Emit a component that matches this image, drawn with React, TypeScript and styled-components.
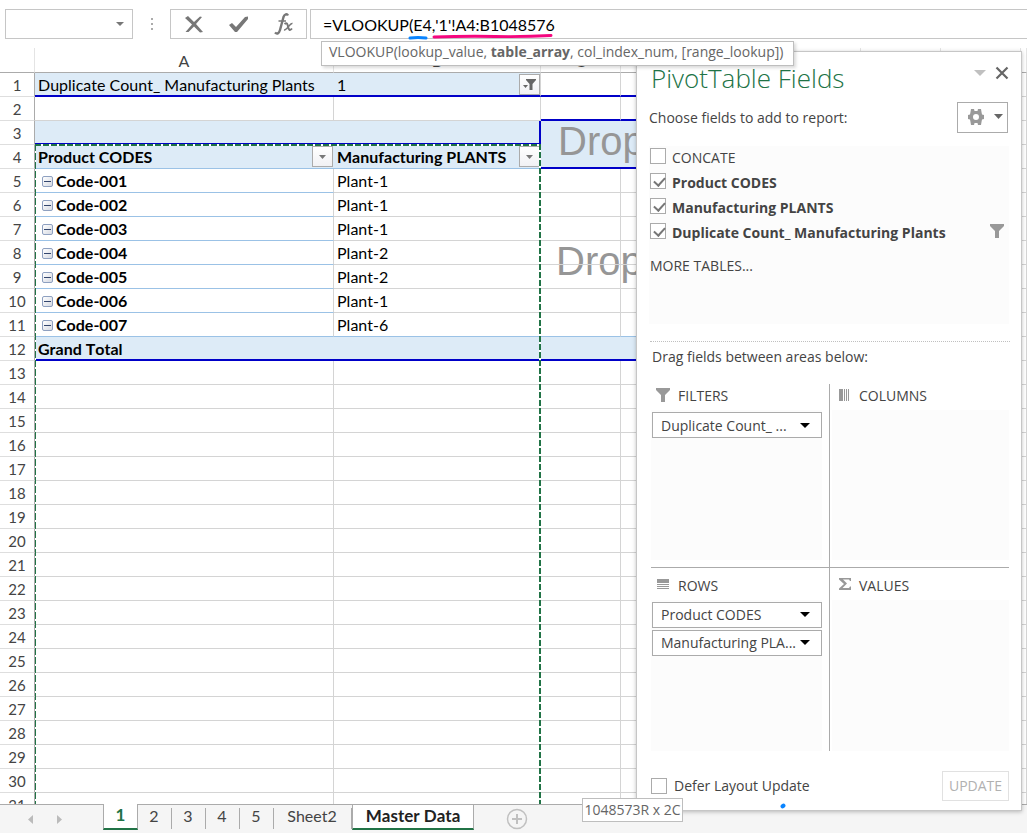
import React from "react";
import styled, { createGlobalStyle, css } from "styled-components";

const sheetFont = `Lato, "Liberation Sans", sans-serif`;
const paneFont = `"Open Sans", "Noto Sans", sans-serif`;

const GlobalStyle = createGlobalStyle`
  * { box-sizing: border-box; }
  body { margin: 0; background: #fff; font-family: ${sheetFont}; font-size: 16px; font-kerning: none; color: #000; }
  button, input { font: inherit; font-kerning: inherit; color: inherit; margin: 0; padding: 0; border-radius: 0; }
  button { background: none; border: 0; cursor: pointer; }
`;

const Window = styled.div`
  position: relative;
  display: flex;
  flex-direction: column;
  height: 100vh;
  min-height: 600px;
  overflow: hidden;
`;

/* ---------- formula bar ---------- */

const FormulaBar = styled.header`
  display: flex;
  flex: none;
  height: 48px;
  padding: 9px 0 9px 5px;
`;

const NameBox = styled.div`
  display: flex;
  width: 128px;
  border: 1px solid #c6c6c6;
  input { flex: 1; min-width: 0; border: 0; outline: 0; padding-left: 6px; }
  button { width: 24px; display: grid; place-items: center; }
`;

const Grip = styled.span`
  display: grid;
  place-items: center;
  width: 37px;
`;

const FormulaActions = styled.div`
  display: flex;
  justify-content: space-around;
  width: 137px;
  border: 1px solid #c6c6c6;
  button { width: 45px; display: grid; place-items: center; }
`;

const FormulaField = styled.div`
  position: relative;
  flex: 1;
  margin-left: 3px;
  border: 1px solid #c6c6c6;
  border-right: 0;
  input { width: 100%; height: 28px; border: 0; outline: 0; padding-left: 12px; }
`;

const PenMarks = styled.svg`
  position: absolute;
  left: 94px;
  top: 22px;
  pointer-events: none;
`;

const SyntaxTip = styled.div`
  position: absolute;
  z-index: 6;
  left: 321px;
  top: 41px;
  height: 25px;
  padding: 0 10px 0 7px;
  border: 1px solid #bebebe;
  background: #fff;
  box-shadow: 2px 2px 3px rgba(0, 0, 0, 0.15);
  color: #666;
  font: 14px/20px ${paneFont};
  white-space: nowrap;
`;

/* ---------- grid ---------- */

const Sheet = styled.main`
  position: relative;
  flex: 1;
  min-height: 0;
  overflow: hidden;
`;

const Grid = styled.table`
  position: relative;
  z-index: 1;
  width: 100%;
  table-layout: fixed;
  border-collapse: separate;
  border-spacing: 0;
`;

const ColHead = styled.th`
  height: 25px;
  padding: 0;
  border-bottom: 1px solid #ababab;
  border-right: 1px solid #e4e4e4;
  color: #444;
  font-weight: 400;
`;

const RowHead = styled.th`
  height: 24px;
  padding: 0;
  border-right: 1px solid #ababab;
  border-bottom: 1px solid #dedede;
  color: #444;
  font-size: 15px;
  font-weight: 400;
  line-height: 20px;
`;

type Line = "grid" | "pale" | "navy";

const bottoms: Record<Line, string> = {
  grid: "1px solid #d4d4d4",
  pale: "1px solid #9bc2e6",
  navy: "2px solid #0000c8",
};

const Cell = styled.td<{ $bottom?: Line; $fill?: boolean; $open?: boolean; $bold?: boolean; $navySide?: boolean }>`
  height: 24px;
  padding: ${(p) => (p.$bottom === "navy" ? "1px 0 0 3px" : "0 0 0 3px")};
  overflow: hidden;
  white-space: nowrap;
  line-height: 20px;
  border-bottom: ${(p) => bottoms[p.$bottom ?? "grid"]};
  border-right: ${(p) => (p.$open ? "0" : p.$navySide ? "2px solid #0000c8" : "1px solid #d4d4d4")};
  ${(p) => p.$fill && css`background: #ddebf7;`}
  ${(p) => p.$bold && css`font-weight: 700;`}
`;

const CellRow = styled.div<{ $inset?: boolean }>`
  display: flex;
  align-items: center;
  justify-content: space-between;
  height: 21px;
  padding-right: ${(p) => (p.$inset ? 1 : 0)}px;
`;

const DropCell = styled(Cell)`
  height: 48px;
  padding: 0 0 0 17px;
  vertical-align: top;
  color: #969696;
  font: 40px/40px "Liberation Sans", Arial, sans-serif;
`;

const DropHint = styled.div`
  position: absolute;
  left: 556px;
  top: 193px;
  color: #969696;
  font: 40px/40px "Liberation Sans", Arial, sans-serif;
`;

const FilterButton = styled.button`
  display: grid;
  place-items: center;
  width: 21px;
  height: 21px;
  border: 1px solid #ababab;
  background: linear-gradient(#fff, #f1f1f4);
`;

const CodeRow = styled.div`
  display: flex;
  align-items: center;
  gap: 3px;
  padding-left: 4px;
`;

const Collapse = styled.button`
  display: grid;
  place-items: center;
  width: 11px;
  height: 11px;
  margin-top: 2px;
  border: 1px solid #8ea0c0;
  border-radius: 2px;
  background: linear-gradient(135deg, #fff, #d5d9e2);
  &::before { content: ""; width: 7px; height: 1px; background: #33466e; }
`;

const CopyOutline = styled.div`
  position: absolute;
  z-index: 2;
  left: 35px;
  top: 96px;
  bottom: 0;
  width: 506px;
  pointer-events: none;
  background:
    repeating-linear-gradient(90deg, #217346 0 6px, #fff 6px 8px) 0 0 / 100% 2px no-repeat,
    repeating-linear-gradient(#217346 0 7px, #fff 7px 9px) 0 0 / 1px 100% no-repeat,
    repeating-linear-gradient(#217346 0 6px, #fff 6px 8px) 100% 0 / 2px 100% no-repeat;
`;

/* ---------- sheet tabs ---------- */

const TabBar = styled.footer`
  display: flex;
  flex: none;
  height: 29px;
  background: #f5f5f5;
`;

const TabNav = styled.div`
  display: flex;
  justify-content: space-between;
  align-items: center;
  width: 103px;
  padding: 0 39px 0 26px;
  border-top: 1px solid #ababab;
  button { display: grid; place-items: center; width: 9px; height: 18px; }
`;

const Tab = styled.button<{ $width?: number }>`
  width: ${(p) => p.$width ?? 34}px;
  height: 29px;
  padding: 0 2px 8px 0;
  border-top: 1px solid #ababab;
  color: #444;
  background: linear-gradient(#ababab, #ababab) 100% 3px / 1px 21px no-repeat;
`;

const ActiveTab = styled(Tab)<{ $green?: boolean }>`
  height: 26px;
  padding: 0 0 4px;
  border: solid #ababab;
  border-width: ${(p) => (p.$green ? "0 1px 2px" : "1px 1px 2px")};
  border-bottom-color: #217346;
  background: #fff;
  color: ${(p) => (p.$green ? "#217346" : "#222")};
  font-size: 17px;
  font-weight: 700;
`;

const TabRest = styled.div`
  flex: 1;
  padding: 3px 0 0 32px;
  border-top: 1px solid #ababab;
  button { display: block; width: 22px; height: 22px; }
`;

const SizeTip = styled.div`
  position: absolute;
  z-index: 7;
  left: 582px;
  bottom: 11px;
  width: 101px;
  height: 24px;
  border: 1px solid #bebebe;
  background: #fff;
  color: #666;
  font: 14px/22px ${paneFont};
  text-align: center;
  white-space: nowrap;
`;

const PenDot = styled.svg`
  position: absolute;
  z-index: 7;
  left: 780px;
  bottom: 24px;
`;

/* ---------- PivotTable pane ---------- */

const Pane = styled.aside`
  position: absolute;
  z-index: 5;
  top: 51px;
  right: 5px;
  bottom: 22px;
  width: 386px;
  display: flex;
  flex-direction: column;
  padding: 0 12px;
  border: 1px solid #c6c6c6;
  background: #fff;
  box-shadow: 0 1px 4px rgba(0, 0, 0, 0.25);
  color: #444;
  font-family: ${paneFont};
  font-size: 14px;
`;

const PaneHeader = styled.div`
  display: flex;
  justify-content: space-between;
  height: 49px;
  padding-top: 8px;
  h2 { margin: 0 0 0 2px; color: #217346; font-size: 26px; font-weight: 300; line-height: 36px; }
`;

const PaneTools = styled.div`
  display: flex;
  align-items: center;
  gap: 9px;
  height: 26px;
  button { display: grid; place-items: center; }
`;

const ChooseRow = styled.div`
  display: flex;
  justify-content: space-between;
  align-items: center;
  height: 33px;
  padding-right: 1px;
`;

const GearButton = styled.button`
  display: flex;
  align-items: center;
  justify-content: space-between;
  width: 51px;
  height: 31px;
  padding: 0 4px 2px 10px;
  border: 1px solid #ababab;
`;

const FieldList = styled.div`
  height: 178px;
  margin-top: 12px;
  padding-left: 1px;
  background: #fcfcfc;
`;

const Field = styled.label<{ $on?: boolean }>`
  display: flex;
  align-items: flex-start;
  gap: 6px;
  height: 25px;
  padding: 2px 5px 0 0;
  line-height: 19px;
  font-weight: ${(p) => (p.$on ? 700 : 400)};
  svg { margin: 1px 0 0 auto; }
`;

const Tick = styled.input`
  appearance: none;
  flex: none;
  width: 16px;
  height: 16px;
  border: 1px solid #ababab;
  background: #fff;
  &:checked::before {
    content: "";
    display: block;
    width: 5px;
    height: 9px;
    margin: 1px 0 0 5px;
    border: solid #777;
    border-width: 0 2px 2px 0;
    transform: rotate(42deg);
  }
`;

const MoreTables = styled.a`
  display: block;
  margin-top: 10px;
  color: #444;
  text-decoration: none;
  line-height: 20px;
`;

const DragHint = styled.p`
  margin: 17px -1px 0 1px;
  padding: 5px 0 0 2px;
  border-top: 1px dotted #c0c0c0;
  line-height: 20px;
`;

const Areas = styled.div`
  flex: 1;
  display: grid;
  grid-template-columns: 178px 1fr;
  grid-template-rows: 1fr 1fr;
  margin: 17px 0 0 2px;
`;

const Area = styled.section<{ $left?: boolean; $top?: boolean }>`
  display: flex;
  flex-direction: column;
  padding: ${(p) => (p.$left ? "0 7px" : "0 0")} ${(p) => (p.$top ? "7px" : "0")} ${(p) => (p.$left ? "0" : "2px")};
  border: 0 solid #ababab;
  border-left-width: ${(p) => (p.$left ? 0 : 1)}px;
  border-bottom-width: ${(p) => (p.$top ? 1 : 0)}px;
  h3 {
    display: flex;
    align-items: center;
    gap: 8px;
    height: ${(p) => (p.$top ? 26 : 32)}px;
    margin: 0;
    padding: ${(p) => (p.$top ? "0 0 3px" : "3px 0 0")} ${(p) => (p.$left ? 5 : 7)}px;
    font-size: 14px;
    font-weight: 400;
  }
  h3 svg { margin-bottom: 2px; }
`;

const DropZone = styled.div`
  flex: 1;
  display: flex;
  flex-direction: column;
  gap: 2px;
  padding: 2px 0 0 1px;
  background: #fcfcfc;
`;

const FieldChip = styled.button`
  display: flex;
  align-items: center;
  justify-content: space-between;
  height: 26px;
  padding: 0 11px 0 8px;
  border: 1px solid #ababab;
  background: #fff;
`;

const PaneFooter = styled.div`
  display: flex;
  justify-content: space-between;
  align-items: center;
  height: 59px;
  padding: 10px 0 0 2px;
  label { display: flex; align-items: center; gap: 7px; }
`;

const UpdateButton = styled.button`
  width: 67px;
  height: 30px;
  border: 1px solid #e1e1e1;
  color: #b1b1b1;
`;

/* ---------- icons ---------- */

const Caret = ({ w = 8, h = 4, color = "#777" }: { w?: number; h?: number; color?: string }) => (
  <svg width={w} height={h} viewBox={`0 0 ${w} ${h}`} aria-hidden="true">
    <path d={`M0 0H${w}L${w / 2} ${h}Z`} fill={color} />
  </svg>
);

const Funnel = () => (
  <svg width="14" height="14" viewBox="0 0 14 14" aria-hidden="true">
    <path d="M0 0H14V2L9 7V14H5V7L0 2Z" fill="#999" />
  </svg>
);

const FunnelApplied = () => (
  <svg width="13" height="12" viewBox="0 0 13 12" aria-hidden="true">
    <path d="M3 0H13V1L9.500 5V11H6.500V5L3 1Z" fill="#666" />
    <path d="M0 6H5L2.500 9Z" fill="#666" />
  </svg>
);

const Gear = () => (
  <svg width="16" height="16" viewBox="0 0 16 16" aria-hidden="true">
    <path
      fillRule="evenodd"
      fill="#999"
      d="M3 0H6L6.500 2H9.500L10 0H13L13.500 3L14 5.500L16 6V10L14 10.500L13.500 13L13 16H10L9.500 14H6.500L6 16H3L2.500 13L2 10.500L0 10V6L2 5.500L2.500 3ZM8 5A3 3 0 1 0 8 11A3 3 0 1 0 8 5Z"
    />
  </svg>
);

const ColumnsIcon = () => (
  <svg width="12" height="12" viewBox="0 0 12 12" aria-hidden="true" fill="#999" shapeRendering="crispEdges">
    <path d="M0 0H4V12H0ZM5 0H6V12H5ZM7 0H8V12H7ZM9 0H10V12H9Z" />
  </svg>
);

const RowsIcon = () => (
  <svg width="14" height="12" viewBox="0 0 14 12" aria-hidden="true" fill="#999" shapeRendering="crispEdges">
    <path d="M1 1H13V5H1ZM1 6H13V7H1ZM1 8H13V9H1ZM1 10H13V11H1Z" />
  </svg>
);

const SigmaIcon = () => (
  <svg width="12" height="12" viewBox="0 0 12 12" aria-hidden="true">
    <path d="M0 0H12V3H11L10 1.500H4L8 5.500L3.500 10H10L11 8.500H12V12H0V10.500L5 6L0 1.500Z" fill="#999" />
  </svg>
);

const sheetRows: Array<[string, string]> = [
  ["Code-001", "Plant-1"],
  ["Code-002", "Plant-1"],
  ["Code-003", "Plant-1"],
  ["Code-004", "Plant-2"],
  ["Code-005", "Plant-2"],
  ["Code-006", "Plant-1"],
  ["Code-007", "Plant-6"],
];

const spareColumns = [0, 1, 2, 3, 4, 5];

const Spare = ({ bottom = "grid" as Line }) => (
  <>
    {spareColumns.map((c) => (
      <Cell key={c} $bottom={bottom} />
    ))}
    <Cell />
  </>
);

const fields = [
  { name: "CONCATE", on: false },
  { name: "Product CODES", on: true },
  { name: "Manufacturing PLANTS", on: true },
  { name: "Duplicate Count_ Manufacturing Plants", on: true, filtered: true },
];

const Chip = ({ label }: { label: string }) => (
  <FieldChip type="button" aria-haspopup="menu">
    {label}
    <Caret w={10} h={5} color="#000" />
  </FieldChip>
);

export default function App() {
  return (
    <Window>
      <GlobalStyle />
      <FormulaBar>
        <NameBox>
          <input aria-label="Name box" />
          <button type="button" aria-label="Show names">
            <Caret />
          </button>
        </NameBox>
        <Grip>
          <svg width="2" height="12" viewBox="0 0 2 12" fill="#ababab" aria-hidden="true">
            <path d="M0 0H2V2H0ZM0 5H2V7H0ZM0 10H2V12H0Z" />
          </svg>
        </Grip>
        <FormulaActions>
          <button type="button" aria-label="Cancel">
            <svg width="18" height="17" viewBox="0 0 18 17" fill="#777">
              <path d="M0 2L3 0L9 6L15 0.500L17 1L11 8L18 16L15 16.500L9 10.500L3.500 16L0.500 16L7 8.500Z" />
            </svg>
          </button>
          <button type="button" aria-label="Enter">
            <svg width="20" height="17" viewBox="0 0 20 17" fill="#777">
              <path d="M0 9L3 7L7 11L16 1L19 0.500V3L8 16H6Z" />
            </svg>
          </button>
          <button type="button" aria-label="Insert function">
            <svg width="20" height="22" viewBox="0 0 20 22" fill="none" stroke="#777">
              <path d="M14 2.500C13 0.500 10.500 1 9.500 4L6 17C5 20.500 3 21.500 1 19.500" strokeWidth="2.400" />
              <path d="M4.500 8H12" strokeWidth="1.500" />
              <path d="M10.500 11C13 9 13.500 11 14 13.500C14.500 17 16 18 18 15.500" strokeWidth="2" />
              <path d="M18.500 10.500C16 9.500 13 17.500 10 17" strokeWidth="1.500" />
            </svg>
          </button>
        </FormulaActions>
        <FormulaField>
          <input aria-label="Formula" defaultValue="=VLOOKUP(E4,'1'!A4:B1048576" />
          <PenMarks width="152" height="12" viewBox="0 0 152 12" fill="none" strokeLinecap="round" aria-hidden="true">
            <path d="M5 6Q13 5 21 6" stroke="#0a84ff" strokeWidth="3" />
            <path d="M29 5Q60 4 90 4.500T146 3.500" stroke="#f5077f" strokeWidth="3" />
          </PenMarks>
        </FormulaField>
      </FormulaBar>
      <SyntaxTip>
        VLOOKUP(lookup_value, <b>table_array</b>, col_index_num, [range_lookup])
      </SyntaxTip>

      <Sheet>
        <DropHint>Drop</DropHint>
        <Grid>
          <colgroup>
            <col style={{ width: 35 }} />
            <col style={{ width: 299 }} />
            <col style={{ width: 207 }} />
            {spareColumns.map((c) => (
              <col key={c} style={{ width: 80 }} />
            ))}
            <col />
          </colgroup>
          <thead>
            <tr>
              <ColHead />
              <ColHead scope="col">A</ColHead>
              <ColHead scope="col">B</ColHead>
              <ColHead scope="col">C</ColHead>
              {spareColumns.map((c) => (
                <ColHead key={c} />
              ))}
            </tr>
          </thead>
          <tbody>
            <tr>
              <RowHead scope="row">1</RowHead>
              <Cell $fill $open $bottom="navy">Duplicate Count_ Manufacturing Plants</Cell>
              <Cell $fill $bottom="navy">
                <CellRow>
                  1
                  <FilterButton type="button" aria-label="Filter duplicate count">
                    <FunnelApplied />
                  </FilterButton>
                </CellRow>
              </Cell>
              <Spare bottom="navy" />
            </tr>
            <tr>
              <RowHead scope="row">2</RowHead>
              <Cell />
              <Cell />
              <Spare bottom="navy" />
            </tr>
            <tr>
              <RowHead scope="row">3</RowHead>
              <Cell $fill $open $bottom="navy" />
              <Cell $fill $navySide $bottom="navy" />
              <DropCell rowSpan={2} colSpan={6} $fill $bottom="navy">Drop</DropCell>
              <Cell />
            </tr>
            <tr>
              <RowHead scope="row">4</RowHead>
              <Cell $fill $open $bold $bottom="pale">
                <CellRow $inset>
                  Product CODES
                  <FilterButton type="button" aria-label="Filter product codes">
                    <Caret w={7} />
                  </FilterButton>
                </CellRow>
              </Cell>
              <Cell $fill $bold $bottom="pale">
                <CellRow>
                  Manufacturing PLANTS
                  <FilterButton type="button" aria-label="Filter plants">
                    <Caret w={7} />
                  </FilterButton>
                </CellRow>
              </Cell>
              <Cell />
            </tr>
            {sheetRows.map(([code, plant], i) => {
              const last = i === sheetRows.length - 1;
              return (
                <tr key={code}>
                  <RowHead scope="row">{i + 5}</RowHead>
                  <Cell $bold $bottom="pale">
                    <CodeRow>
                      <Collapse type="button" aria-label={`Collapse ${code}`} />
                      {code}
                    </CodeRow>
                  </Cell>
                  <Cell $bottom={last ? "pale" : "grid"}>{plant}</Cell>
                  <Spare bottom={last ? "pale" : "grid"} />
                </tr>
              );
            })}
            <tr>
              <RowHead scope="row">12</RowHead>
              <Cell $fill $open $bold $bottom="navy">Grand Total</Cell>
              <Cell $fill $open $bottom="navy" />
              <Cell $fill $open $bottom="navy" colSpan={6} />
              <Cell />
            </tr>
            {Array.from({ length: 19 }, (_, i) => (
              <tr key={i}>
                <RowHead scope="row">{i + 13}</RowHead>
                <Cell />
                <Cell />
                <Spare />
              </tr>
            ))}
          </tbody>
        </Grid>
        <CopyOutline />
      </Sheet>

      <TabBar>
        <TabNav>
          <button type="button" aria-label="Previous sheets">
            <svg width="5" height="9" viewBox="0 0 5 9"><path d="M5 0V9L0 4.500Z" fill="#bbb" /></svg>
          </button>
          <button type="button" aria-label="Next sheets">
            <svg width="5" height="9" viewBox="0 0 5 9"><path d="M0 0V9L5 4.500Z" fill="#bbb" /></svg>
          </button>
        </TabNav>
        <ActiveTab type="button" $green $width={35}>1</ActiveTab>
        <Tab type="button">2</Tab>
        <Tab type="button">3</Tab>
        <Tab type="button">4</Tab>
        <Tab type="button">5</Tab>
        <Tab type="button" $width={78}>Sheet2</Tab>
        <ActiveTab type="button" $width={122}>Master Data</ActiveTab>
        <TabRest>
          <button type="button" aria-label="New sheet">
            <svg width="22" height="22" viewBox="0 0 22 22" fill="none" stroke="#c0c0c0">
              <circle cx="11" cy="11" r="9.500" strokeWidth="1.500" />
              <path d="M11 6V16M6 11H16" strokeWidth="2" />
            </svg>
          </button>
        </TabRest>
      </TabBar>

      <Pane aria-label="PivotTable Fields">
        <PaneHeader>
          <h2>PivotTable Fields</h2>
          <PaneTools>
            <button type="button" aria-label="Pane options">
              <Caret w={12} h={6} color="#c0c0c0" />
            </button>
            <button type="button" aria-label="Close">
              <svg width="14" height="14" viewBox="0 0 14 14" stroke="#666" strokeWidth="2.200">
                <path d="M1.500 1.500L12.500 12.500M12.500 1.500L1.500 12.500" />
              </svg>
            </button>
          </PaneTools>
        </PaneHeader>
        <ChooseRow>
          Choose fields to add to report:
          <GearButton type="button" aria-label="Tools">
            <Gear />
            <Caret w={9} h={5} color="#666" />
          </GearButton>
        </ChooseRow>
        <FieldList>
          {fields.map((f) => (
            <Field key={f.name} $on={f.on}>
              <Tick type="checkbox" defaultChecked={f.on} />
              {f.name}
              {f.filtered && <Funnel />}
            </Field>
          ))}
          <MoreTables href="#more">MORE TABLES...</MoreTables>
        </FieldList>
        <DragHint>Drag fields between areas below:</DragHint>
        <Areas>
          <Area $left $top>
            <h3><Funnel />FILTERS</h3>
            <DropZone><Chip label="Duplicate Count_ ..." /></DropZone>
          </Area>
          <Area $top>
            <h3><ColumnsIcon />COLUMNS</h3>
            <DropZone />
          </Area>
          <Area $left>
            <h3><RowsIcon />ROWS</h3>
            <DropZone>
              <Chip label="Product CODES" />
              <Chip label="Manufacturing PLA..." />
            </DropZone>
          </Area>
          <Area>
            <h3><SigmaIcon />VALUES</h3>
            <DropZone />
          </Area>
        </Areas>
        <PaneFooter>
          <label>
            <Tick type="checkbox" />
            Defer Layout Update
          </label>
          <UpdateButton type="button" disabled>UPDATE</UpdateButton>
        </PaneFooter>
      </Pane>
      <SizeTip>1048573R x 2C</SizeTip>
      <PenDot width="6" height="6" viewBox="0 0 6 6" aria-hidden="true">
        <ellipse cx="3" cy="3" rx="2.600" ry="2.100" fill="#0a84ff" transform="rotate(-35 3 3)" />
      </PenDot>
    </Window>
  );
}
